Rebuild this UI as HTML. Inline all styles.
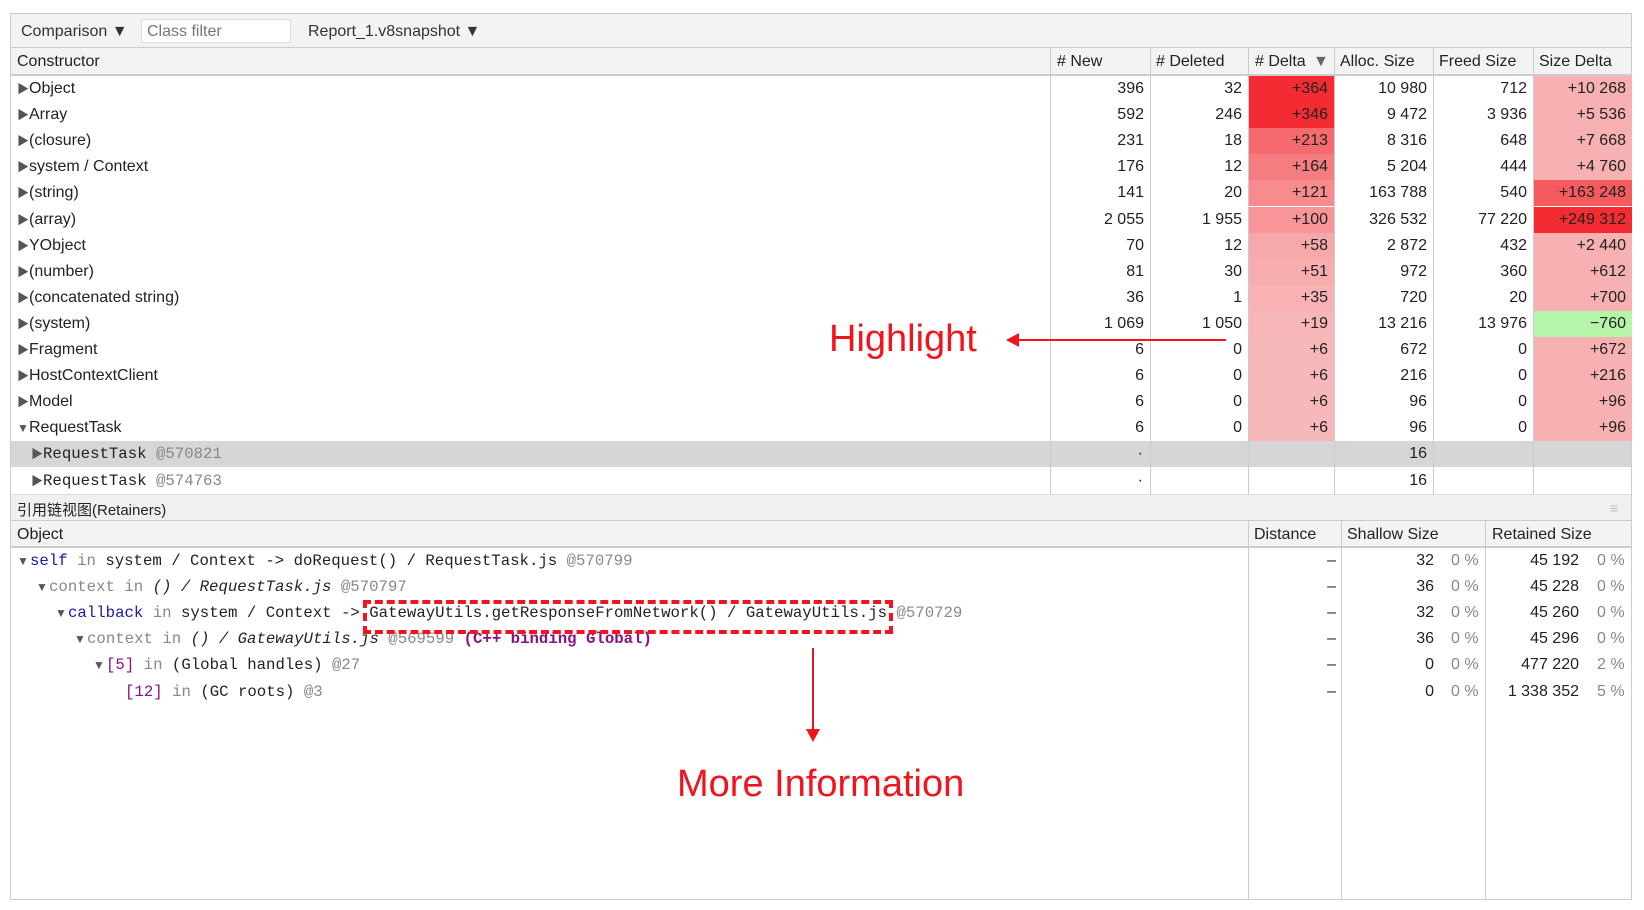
<!DOCTYPE html>
<html><head><meta charset="utf-8"><style>
*{box-sizing:border-box;margin:0;padding:0}
body{width:1644px;height:910px;background:#fff;position:relative;overflow:hidden;font-family:"Liberation Sans","Noto Sans CJK SC",sans-serif;font-size:16px;color:#222}
.abs{position:absolute;white-space:nowrap}
.frame{left:10px;top:13px;width:1622px;height:887px;border:1px solid #ccc;background:#fff}
.tb{left:11px;top:14px;width:1620px;height:34px;background:#f3f3f3;border-bottom:1px solid #ccc}
.hdr{background:#f3f3f3;border-bottom:2px solid #ccc}
.vl{position:absolute;width:1px;background:#ccc}
.row{position:absolute;left:11px;width:1620px;height:26px;line-height:26px}
.c{position:absolute;top:0;height:26px;text-align:right;padding-right:6px;white-space:nowrap}
.mono{font-family:"Liberation Mono",monospace;font-size:15.7px}
.g{color:#888}
.b{color:#1a1aa6}
.p{color:#881280}
.red{color:#f0141e}
</style></head><body>
<div class="abs frame"></div>
<div class="abs tb">
 <span class="abs" style="left:10px;top:9px;color:#333">Comparison ▼</span>
 <div class="abs" style="left:130px;top:5px;width:150px;height:24px;background:#fff;border:1px solid #ddd;color:#777;padding:3px 5px">Class filter</div>
 <span class="abs" style="left:297px;top:9px;color:#333">Report_1.v8snapshot ▼</span>
</div>
<div class="abs hdr" style="left:11px;top:48px;width:1620px;height:28px"></div>
<div class="abs" style="left:17px;top:53px">Constructor</div>
<div class="abs" style="left:1057px;top:53px"># New</div>
<div class="abs" style="left:1156px;top:53px"># Deleted</div>
<div class="abs" style="left:1255px;top:53px"># Delta</div>
<div class="abs" style="left:1313px;top:53px;color:#666">▼</div>
<div class="abs" style="left:1340px;top:53px">Alloc. Size</div>
<div class="abs" style="left:1439px;top:53px">Freed Size</div>
<div class="abs" style="left:1539px;top:53px">Size Delta</div>
<div id="rows"></div>
<div class="vl" style="left:1050px;top:48px;height:446px"></div>
<div class="vl" style="left:1150px;top:48px;height:446px"></div>
<div class="vl" style="left:1248px;top:48px;height:446px"></div>
<div class="vl" style="left:1334px;top:48px;height:446px"></div>
<div class="vl" style="left:1433px;top:48px;height:446px"></div>
<div class="vl" style="left:1533px;top:48px;height:446px"></div>

<div class="abs" style="left:11px;top:494px;width:1620px;height:27px;background:#f0f0f0;border-bottom:1px solid #ccc;border-top:1px solid #ddd"></div>
<div class="abs" style="left:17px;top:499px;font-size:15px">引用链视图(Retainers)</div>
<div class="abs" style="left:1610px;top:500px;color:#bbb;font-size:14px">≡</div>
<div class="abs hdr" style="left:11px;top:521px;width:1620px;height:27px"></div>
<div class="abs" style="left:17px;top:526px">Object</div>
<div class="abs" style="left:1254px;top:526px">Distance</div>
<div class="abs" style="left:1347px;top:526px">Shallow Size</div>
<div class="abs" style="left:1492px;top:526px">Retained Size</div>
<div class="vl" style="left:1248px;top:521px;height:378px"></div>
<div class="vl" style="left:1341px;top:521px;height:378px"></div>
<div class="vl" style="left:1485px;top:521px;height:378px"></div>
<div id="ret"></div>

<div class="abs red" style="left:829px;top:318px;font-size:38px">Highlight</div>
<div class="abs" style="left:1016px;top:339px;width:210px;height:2px;background:#f0141e"></div>
<div class="abs" style="left:1006px;top:333px;width:0;height:0;border-top:7px solid transparent;border-bottom:7px solid transparent;border-right:13px solid #f0141e"></div>
<div class="abs" style="left:363px;top:600px;width:530px;height:34px;border:4px dashed #f0141e"></div>
<div class="abs" style="left:812px;top:648px;width:2px;height:84px;background:#f0141e"></div>
<div class="abs" style="left:806px;top:729px;width:0;height:0;border-left:7px solid transparent;border-right:7px solid transparent;border-top:13px solid #f0141e"></div>
<div class="abs red" style="left:677px;top:763px;font-size:38px">More Information</div>

<script>
var d=[["Object","396","32","+364","10 980","712","+10 268","#f52b33","#f7b1b2"],
["Array","592","246","+346","9 472","3 936","+5 536","#f52b33","#f7b1b2"],
["(closure)","231","18","+213","8 316","648","+7 668","#f56a6e","#f7b1b2"],
["system / Context","176","12","+164","5 204","444","+4 760","#f57c80","#f7b1b2"],
["(string)","141","20","+121","163 788","540","+163 248","#f78b8e","#f55a5e"],
["(array)","2 055","1 955","+100","326 532","77 220","+249 312","#f79599","#f52b33"],
["YObject","70","12","+58","2 872","432","+2 440","#f7a8aa","#f7b1b2"],
["(number)","81","30","+51","972","360","+612","#f7acae","#f7b1b2"],
["(concatenated string)","36","1","+35","720","20","+700","#f8b2b4","#f7b1b2"],
["(system)","1 069","1 050","+19","13 216","13 976","\u2212760","#f7b6b8","#b5f5a9"],
["Fragment","6","0","+6","672","0","+672","#f7b8ba","#f7b1b2"],
["HostContextClient","6","0","+6","216","0","+216","#f7b8ba","#f7b1b2"],
["Model","6","0","+6","96","0","+96","#f7b8ba","#f7b1b2"],
["RequestTask","6","0","+6","96","0","+96","#f7b8ba","#f7b1b2"]];
var h="";
d.forEach(function(r,i){var y=76+i*26.1;
h+='<div class="row" style="top:'+y+'px"><span class="abs" style="left:6px;font-size:12px;color:#555">'+(i==13?'▼':'▶')+'</span><span class="abs" style="left:18px">'+r[0]+'</span>';
for(var k=0;k<6;k++){
var bg=k==2?r[7]:(k==5?r[8]:'transparent');
var l=[1050,1150,1248,1334,1433,1533][k]-11,w=[100,98,86,99,100,99][k];
h+='<div class="c" style="left:'+(l+1)+'px;width:'+(w-1)+'px;background:'+bg+'">'+r[k+1]+'</div>';}
h+='</div>';});
[["570821",1],["574763",0]].forEach(function(r,j){var y=76+(14+j)*26.1;
h+='<div class="row" style="top:'+y+'px;background:'+(r[1]?'#d6d6d6':'#fff')+'"><span class="abs" style="left:20px;font-size:12px;color:#555">▶</span><span class="abs mono" style="left:32px">RequestTask <span class="g">@'+r[0]+'</span></span><div class="c" style="left:1040px;width:98px">·</div><div class="c" style="left:1324px;width:98px">16</div></div>';});
document.getElementById('rows').innerHTML=h;
var R=[[0,'▼','<span class="b">self</span> <span class="g">in</span> system / Context -&gt; doRequest() / RequestTask.js <span class="g">@570799</span>','32','0 %','45 192','0 %'],
[1,'▼','<span class="g">context</span> <span class="g">in</span> <i>() / RequestTask.js</i> <span class="g">@570797</span>','36','0 %','45 228','0 %'],
[2,'▼','<span class="b">callback</span> <span class="g">in</span> system / Context -&gt; GatewayUtils.getResponseFromNetwork() / GatewayUtils.js <span class="g">@570729</span>','32','0 %','45 260','0 %'],
[3,'▼','<span class="g">context</span> <span class="g">in</span> <i>() / GatewayUtils.js</i> <span class="g">@569599</span> <b class="p">(C++ binding Global)</b>','36','0 %','45 296','0 %'],
[4,'▼','<span class="p">[5]</span> <span class="g">in</span> (Global handles) <span class="g">@27</span>','0','0 %','477 220','2 %'],
[5,'','<span class="p">[12]</span> <span class="g">in</span> (GC roots) <span class="g">@3</span>','0','0 %','1 338 352','5 %']];
var g="";
R.forEach(function(r,i){var y=548+i*26.1;
g+='<div class="row" style="top:'+y+'px"><span class="abs" style="left:'+(6+r[0]*19)+'px;font-size:12px;color:#555">'+r[1]+'</span><span class="abs mono" style="left:'+(19+r[0]*19)+'px;white-space:pre">'+r[2]+'</span>'+
'<div class="c" style="left:1238px;width:93px">\u2013</div>'+
'<div class="c" style="left:1331px;width:98px">'+r[3]+'</div><div class="abs g" style="left:1440px">'+r[4]+'</div>'+
'<div class="c" style="left:1475px;width:99px">'+r[5]+'</div><div class="abs g" style="left:1586px">'+r[6]+'</div></div>';});
document.getElementById('ret').innerHTML=g;
</script>
</body></html>
